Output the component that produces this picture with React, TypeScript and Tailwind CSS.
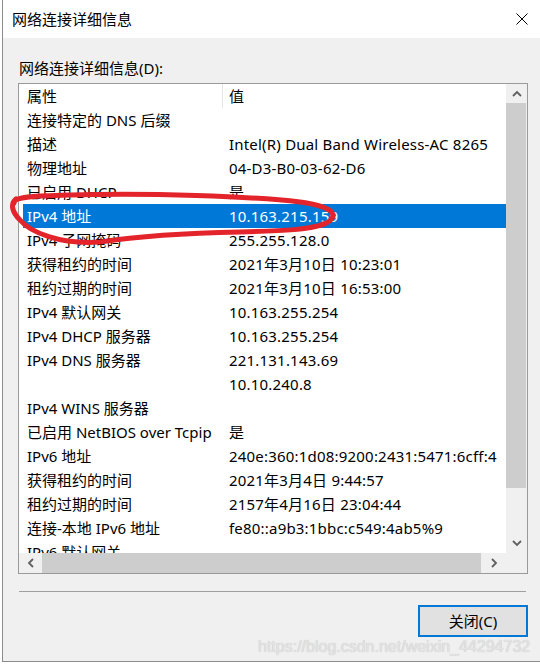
import React from 'react';

const rows: [string, string][] = [
  ['连接特定的 DNS 后缀', ''],
  ['描述', 'Intel(R) Dual Band Wireless-AC 8265'],
  ['物理地址', '04-D3-B0-03-62-D6'],
  ['已启用 DHCP', '是'],
  ['IPv4 地址', '10.163.215.159'],
  ['IPv4 子网掩码', '255.255.128.0'],
  ['获得租约的时间', '2021年3月10日 10:23:01'],
  ['租约过期的时间', '2021年3月10日 16:53:00'],
  ['IPv4 默认网关', '10.163.255.254'],
  ['IPv4 DHCP 服务器', '10.163.255.254'],
  ['IPv4 DNS 服务器', '221.131.143.69'],
  ['', '10.10.240.8'],
  ['IPv4 WINS 服务器', ''],
  ['已启用 NetBIOS over Tcpip', '是'],
  ['IPv6 地址', '240e:360:1d08:9200:2431:5471:6cff:4'],
  ['获得租约的时间', '2021年3月4日 9:44:57'],
  ['租约过期的时间', '2157年4月16日 23:04:44'],
  ['连接-本地 IPv6 地址', 'fe80::a9b3:1bbc:c549:4ab5%9'],
  ['IPv6 默认网关', ''],
];

const SELECTED = 4;

function Chevron({ dir }: { dir: 'up' | 'down' | 'left' | 'right' }) {
  const points = {
    up: '1,6 5,2 9,6',
    down: '1,2 5,6 9,2',
    left: '6,1 2,5 6,9',
    right: '2,1 6,5 2,9',
  }[dir];
  const vertical = dir === 'up' || dir === 'down';
  return (
    <svg width={vertical ? 10 : 8} height={vertical ? 8 : 10} viewBox={vertical ? '0 0 10 8' : '0 0 8 10'}>
      <polyline points={points} fill="none" stroke="#606060" strokeWidth={1.8} />
    </svg>
  );
}

export default function App() {
  return (
    <div className="relative w-[540px] h-[666px] overflow-hidden bg-white font-[Noto_Sans,Noto_Sans_CJK_SC,sans-serif] text-black">
      <div className="ml-[2px] h-[662px] border-l border-b border-[#8c8c8c] flex flex-col">
        {/* Title bar */}
        <div className="h-[38px] bg-white flex items-center justify-between">
          <span className="pl-[9px] text-[15px] leading-none">网络连接详细信息</span>
          <svg className="mr-[12px]" width="12" height="12" viewBox="0 0 12 12">
            <path d="M0.5 0.5 L11.5 11.5 M11.5 0.5 L0.5 11.5" stroke="#000" strokeWidth={1} />
          </svg>
        </div>

        {/* Body */}
        <div className="flex-1 bg-[#f0f0f0] pl-[15px] pt-[20px]">
          <div className="h-[20px] leading-[20px] text-[15px] pl-[1px]">网络连接详细信息(D):</div>

          {/* List view */}
          <div className="mt-[5px] w-[510px] h-[491px] border border-[#9a9a9a] bg-white flex flex-col">
            <div className="flex h-[469px]">
              <div className="w-[487px] overflow-hidden flex flex-col">
                <div className="h-[24px] flex items-center text-[15px] shrink-0">
                  <div className="w-[203px] pl-[8px]">属性</div>
                  <div className="w-px h-[24px] bg-[#e5e5e5]" />
                  <div className="pl-[6px]">值</div>
                </div>
                {rows.map(([k, v], i) => (
                  <div
                    key={i}
                    className={`ml-[4px] h-[24px] shrink-0 flex items-center text-[15px] whitespace-nowrap ${
                      i === SELECTED ? 'bg-[#0078d7] text-white' : ''
                    }`}
                  >
                    <div className="w-[206px] pl-[4px] overflow-hidden">{k}</div>
                    <div className="flex-1 overflow-hidden tracking-[0.2px]">{v}</div>
                  </div>
                ))}
              </div>
              {/* Vertical scrollbar */}
              <div className="w-[21px] bg-[#f0f0f0] flex flex-col">
                <div className="h-[19px] flex items-center justify-center">
                  <Chevron dir="up" />
                </div>
                <div className="h-[385px] mr-[1px] bg-[#cdcdcd]" />
                <div className="flex-1" />
                <div className="h-[21px] flex items-center justify-center">
                  <Chevron dir="down" />
                </div>
              </div>
            </div>
            {/* Horizontal scrollbar */}
            <div className="h-[20px] flex bg-[#f0f0f0]">
              <div className="w-[23px] flex items-center justify-center">
                <Chevron dir="left" />
              </div>
              <div className="w-[439px] bg-[#cdcdcd]" />
              <div className="w-[25px] flex items-center justify-center">
                <Chevron dir="right" />
              </div>
              <div className="flex-1" />
            </div>
          </div>

          <div className="mt-[17px] ml-[1px] w-[507px] h-px bg-[#a0a0a0]" />

          <div className="mt-[13px] ml-[400px] w-[110px] h-[32px] border-2 border-[#0078d7] bg-[#e1e1e1] flex items-center justify-center text-[15px]">
            关闭(C)
          </div>
        </div>
      </div>

      {/* Watermark */}
      <div className="absolute left-[258px] top-[638px] text-[16px] leading-[18px] font-[Liberation_Sans,Arial,sans-serif] text-[#e4e4e4] [text-shadow:0_0_1px_#b8b8b8] whitespace-nowrap">
        https://blog.csdn.net/weixin_44294732
      </div>

      {/* Red annotation */}
      <svg className="absolute left-0 top-0 pointer-events-none" width="540" height="666">
        <path
          d="M14 203 C14 196 40 196 70 195 C150 193 250 196 300 202 C330 206 340 214 328 222 C315 230 280 231 240 232 C190 233 140 236 100 242 C60 245 30 232 20 220 C12 212 10 204 16 199"
          fill="none"
          stroke="#e3242b"
          strokeWidth={5}
          strokeLinecap="round"
        />
      </svg>
    </div>
  );
}
